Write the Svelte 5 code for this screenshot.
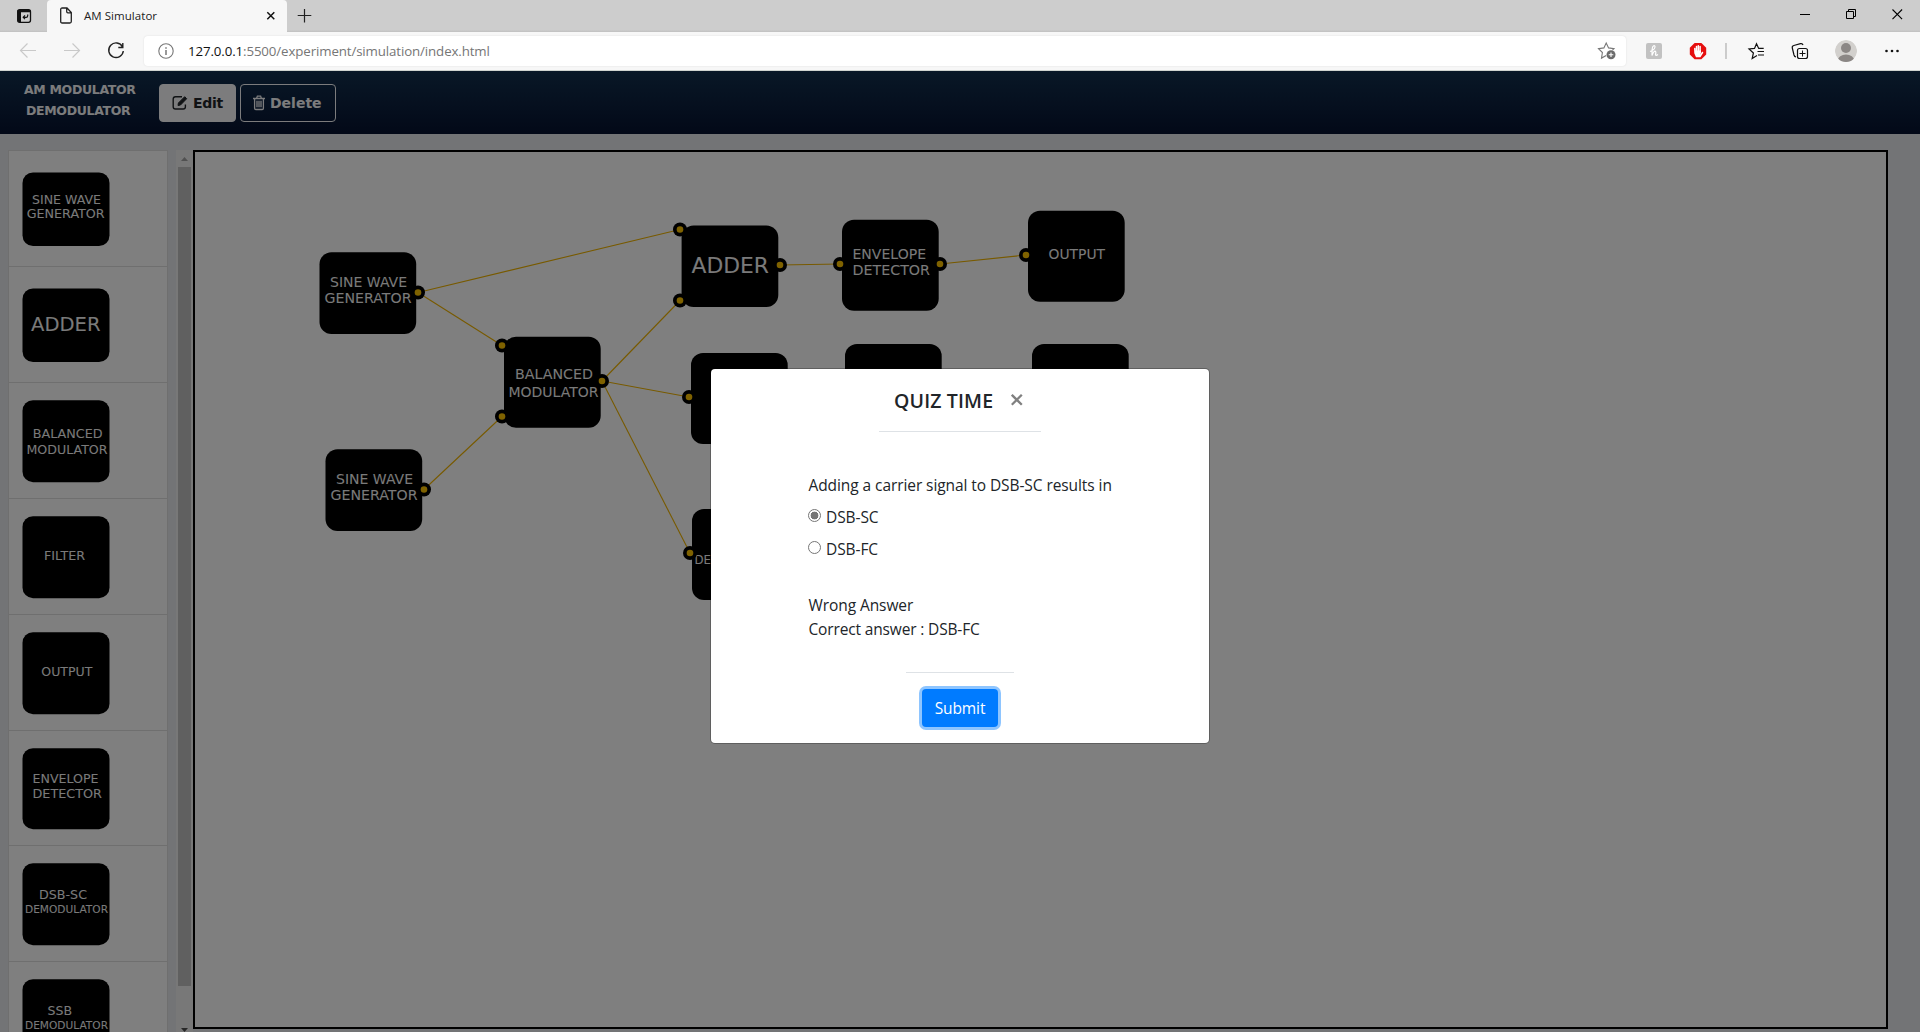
<script>
  // label line: [text, left, baseline, width, font size]
  const palette = [
    { h: 116, y: 22, bh: 73.5, labels: [['SINE WAVE', 24, 53, 69, 12.5], ['GENERATOR', 18.7, 67.5, 78, 12.5]] },
    { h: 116, y: 22, bh: 73.5, labels: [['ADDER', 23, 64.5, 69.5, 19.8]] },
    { h: 116, y: 17.7, bh: 82, labels: [['BALANCED', 24.7, 55.5, 70, 12.5], ['MODULATOR', 18.5, 71.8, 81, 12.5]] },
    { h: 116, y: 17.7, bh: 82, labels: [['FILTER', 36, 61.3, 41, 12.5]] },
    { h: 116, y: 17.7, bh: 82, labels: [['OUTPUT', 33.3, 61.3, 51, 12.5]] },
    { h: 115, y: 17.7, bh: 81, labels: [['ENVELOPE', 24.5, 52.7, 66, 12.5], ['DETECTOR', 24.5, 67, 69.5, 12.5]] },
    { h: 116, y: 17.7, bh: 82, labels: [['DSB-SC', 31, 53.2, 48, 12.5], ['DEMODULATOR', 17, 67.4, 83, 11.2]] },
    { h: 116, y: 17.7, bh: 82, labels: [['SSB', 39.5, 53.2, 24.5, 12.5], ['DEMODULATOR', 17, 67.4, 83, 11.2]] }
  ];

  const nodes = [
    { x: 319.5, y: 252.3, h: 81.7, labels: [['SINE WAVE', 330, 287.2, 77, 13.7], ['GENERATOR', 324.5, 303, 87, 13.7]], ports: [[418, 292.5]] },
    { x: 325.5, y: 449.3, h: 81.7, labels: [['SINE WAVE', 336, 484.2, 77, 13.7], ['GENERATOR', 330.5, 500, 87, 13.7]], ports: [[424, 489.5]] },
    { x: 504, y: 336.7, h: 91, labels: [['BALANCED', 515, 379.3, 78, 13.7], ['MODULATOR', 508.5, 397.2, 90, 13.7]], ports: [[502, 345.5], [502, 416.5], [602, 381]] },
    { x: 681.6, y: 225.5, h: 81.5, labels: [['ADDER', 691.5, 272.5, 77.5, 22]], ports: [[680, 229.5], [680, 300.5], [780, 265]] },
    { x: 842, y: 219.7, h: 91, labels: [['ENVELOPE', 852.5, 259.2, 73.5, 13.7], ['DETECTOR', 852.5, 275, 77.5, 13.7]], ports: [[840, 264], [940, 264]] },
    { x: 1028, y: 210.7, h: 91, labels: [['OUTPUT', 1048.5, 259.4, 56.5, 13.7]], ports: [[1026, 255]] },
    { x: 691, y: 353, h: 91, labels: [], ports: [[689, 397]] },
    { x: 845, y: 344, h: 91, labels: [], ports: [] },
    { x: 1032, y: 344, h: 91, labels: [], ports: [] },
    { x: 692, y: 509, h: 91, labels: [['DEMODULATOR', 694.5, 563.8, 92, 12.3]], ports: [[690, 553]] }
  ];

  const wires = [
    [418, 292.5, 680, 229.5], [418, 292.5, 502, 345.5], [424, 489.5, 502, 416.5],
    [602, 381, 680, 300.5], [602, 381, 689, 397], [602, 381, 690, 553],
    [780, 265, 840, 264], [940, 264, 1026, 255]
  ];
  let answer = $state('DSB-SC');
</script>

<div class="window">
  <div class="tabs">
    <svg class="tabmenu" width="47" height="32" viewBox="0 0 47 32"><rect x="17.700" y="9.700" width="12.800" height="12.600" rx="2" fill="none" stroke="#111" stroke-width="1.300"/><path d="M17.500 12h3.500v10h-1.800q-1.700 0-1.700-1.700zM17.500 10h13v2.200h-13z" fill="#111"/><path d="M27.700 14.500v1.200q0 1.600-1.600 1.600h-2.400M25 15.400l-1.800 1.900 1.800 1.900" fill="none" stroke="#111" stroke-width="1.200"/></svg>
    <div class="tab">
      <svg width="14" height="18" viewBox="0 0 14 18"><path d="M1.700 2.500Q1.700 1 3.200 1H8l4.300 4.500v9q0 1.500-1.500 1.500H3.200q-1.500 0-1.500-1.500zM7.700 1v3.600q0 1.200 1.200 1.200h3.400" fill="none" stroke="#222" stroke-width="1.300"/></svg>
      <span>AM Simulator</span>
      <svg class="x" width="10" height="10" viewBox="0 0 10 10"><path d="M1.300 1.300l7 7M8.300 1.300l-7 7" stroke="#111" stroke-width="1.500"/></svg>
    </div>
    <svg class="plus" width="16" height="16" viewBox="0 0 16 16"><path d="M7.500 1v13.500M.7 7.500h13.600" stroke="#222" stroke-width="1.200"/></svg>
    <svg class="winctl" width="122" height="32" viewBox="0 0 122 32"><path d="M2 14.500h10M94.500 9.500l9.600 9.600M104.100 9.500l-9.600 9.600" stroke="#000" stroke-width="1.100" fill="none"/><path d="M48.500 11.500h7v7h-7zM50.500 11.500v-2h7v7h-2" stroke="#000" fill="none"/></svg>
  </div>

  <div class="toolbar">
    <svg width="144" height="38" viewBox="0 0 144 38" fill="none"><path d="M36 18.500H20.500M27.500 11.500l-7 7 7 7M64 18.500h15.500M72.500 11.500l7 7-7 7" stroke="#c9c9c9" stroke-width="1.200"/><path d="M122.500 14.800A7.300 7.300 0 1 0 123.300 19M122.800 11v4.500h-4.500" stroke="#222" stroke-width="1.400"/></svg>
    <div class="address">
      <svg width="16" height="16" viewBox="0 0 16 16"><circle cx="8" cy="8" r="7.200" fill="none" stroke="#777" stroke-width="1.100"/><path d="M8 7v5M8 4.200v1.500" stroke="#777" stroke-width="1.500"/></svg>
      <p><b>127.0.0.1</b>:5500/experiment/simulation/index.html</p>
      <svg class="fav" width="20" height="20" viewBox="0 0 20 20"><path d="M9.200 14.500l-4.700 2.600.9-5.600-3.900-3.800 5.400-.8L9.200 2l2.400 4.900 5.400.8-1.500 1.500" fill="none" stroke="#777" stroke-width="1.100"/><circle cx="14" cy="13.800" r="4.500" fill="#6b6b6b"/><path d="M14 11.500v4.600M11.700 13.800h4.600" stroke="#fff" stroke-width="1.100"/></svg>
    </div>
    <svg class="ext" width="294" height="38" viewBox="1626 32 294 38">
      <rect x="1646" y="43" width="16" height="16" rx="2" fill="#c2c2c2"/>
      <path d="M1650 51.500q4.500-1.500 5-4.500 0-1.600-1.300-1.200-1.500.7-1.600 4l-.1 5.700q1.800-4.700 3.300-4.300 1 .5.200 3.400 0 1.500 2.500-.2" fill="none" stroke="#fff" stroke-width="1.200"/>
      <path d="M1694.600 43h6.800l4.800 4.800v6.600l-4.800 4.800h-6.800l-4.800-4.800v-6.600z" fill="#e60f0f"/>
      <path d="M1694.800 48.500l.2 4.500 1.500 3.500h3.500l2.500-4M1696.500 46.500v5M1698.300 45.700v6M1700.100 46.500v6" fill="none" stroke="#fff" stroke-width="1.500" stroke-linecap="round"/><path d="M1695 50.500h6l-.5 5-1.500 1.500h-2l-2-3z" fill="#fff"/>
      <path d="M1726 43v16" stroke="#c4c4c4" stroke-width="1.700"/>
      <path d="M1757 55.500l-4.800 3 1.200-5.500-4.400-4 5.500-.6 2-4.700 2.200 4.700h5M1757.500 51.500h6.500M1758 55h6" fill="none" stroke="#111" stroke-width="1.200"/>
      <path d="M1796 57q-1.500-.2-2-2l-1.700-7q-.4-2 1.500-2.500l6.700-1.800q2-.4 2.500 1.300" fill="none" stroke="#111" stroke-width="1.200"/><rect x="1797.500" y="48.500" width="10" height="10" rx="2" fill="none" stroke="#111" stroke-width="1.200"/><path d="M1802.500 50.500v6M1799.500 53.500h6" stroke="#111"/>
      <clipPath id="face"><circle cx="1846" cy="51" r="11"/></clipPath><g clip-path="url(#face)"><circle cx="1846" cy="51" r="11" fill="#d2d0cd"/><circle cx="1846" cy="48" r="5" fill="#8b8785"/><ellipse cx="1846" cy="60.500" rx="8.200" ry="6" fill="#8b8785"/></g>
      <g fill="#111"><circle cx="1886.500" cy="51" r="1.300"/><circle cx="1892" cy="51" r="1.300"/><circle cx="1897.500" cy="51" r="1.300"/></g>
    </svg>
  </div>

  <div class="page">
    <header>
      <h1><span>AM MODULATOR</span><span class="second">DEMODULATOR</span></h1>
      <button class="btn edit"><svg width="16" height="16" viewBox="0 0 16 16" fill="none" stroke="#212529"><path d="M10 1.800H3.500Q1.200 1.800 1.200 4v7.700q0 2.300 2.300 2.300h7.700q2.200 0 2.200-2.300V9.500" stroke-width="1.400"/><path d="M6 10.500l.4-2.500 6.300-6.300 2 2-6.200 6.300z" fill="#212529"/></svg><span>Edit</span></button>
      <button class="btn del"><svg width="12" height="16" viewBox="0 0 12 16" fill="none" stroke="#f8f9fa" stroke-width="1.300"><path d="M0 3.500h12M3.600 3.300l.8-2.200h3.200l.8 2.200M1.600 3.500v9.800q0 1.200 1.200 1.200h6.400q1.200 0 1.200-1.200V3.500M4 5.800v6.500M6 5.800v6.500M8 5.800v6.500"/></svg><span>Delete</span></button>
    </header>

    <main>
      <aside>
        <ul>
          {#each palette as item}
            <li>
              <svg width="110" height={item.h} viewBox="1 0.500 110 {item.h}">
                <rect x="14.500" y={item.y} width="87" height={item.bh} rx="10.500"/>
                {#each item.labels as [t, x, y, w, s]}<text {x} {y} font-size={s} textLength={w} lengthAdjust="spacingAndGlyphs">{t}</text>{/each}
              </svg>
            </li>
          {/each}
        </ul>
        <div class="scroll">
          <svg width="17" height="17" viewBox="0 0 17 17"><path d="M5 11h7l-3.500-4z" fill="#a3a3a3"/></svg>
          <div class="thumb"></div>
          <svg class="down" width="17" height="17" viewBox="0 0 17 17"><path d="M5 13h7l-3.500 4z" fill="#505050"/></svg>
        </div>
      </aside>
      <section class="canvas">
        <svg width="1691" height="875" viewBox="195 152 1691 875">
          {#each nodes as n}
            <rect x={n.x} y={n.y} width="96.700" height={n.h} rx="12"/>
            {#each n.labels as [t, x, y, w, s]}<text {x} {y} font-size={s} textLength={w} lengthAdjust="spacingAndGlyphs">{t}</text>{/each}
          {/each}
          {#each wires as [x1, y1, x2, y2]}<line {x1} {y1} {x2} {y2}/>{/each}
          {#each nodes as n}{#each n.ports as [cx, cy]}<circle {cx} {cy} r="7"/><circle class="pin" {cx} {cy} r="3.300"/>{/each}{/each}
        </svg>
      </section>
    </main>

    <div class="backdrop">
      <div class="modal">
        <div class="head"><h2>QUIZ TIME</h2><svg width="12" height="12" viewBox="0 0 12 12"><path d="M.8.800l10 10M10.800.800l-10 10" stroke="#808080" stroke-width="2.300"/></svg></div>
        <div class="quiz">
          <p class="q">Adding a carrier signal to DSB-SC results in</p>
          {#each ['DSB-SC', 'DSB-FC'] as option}
            <label><input type="radio" name="quiz" value={option} bind:group={answer}/><span>{option}</span></label>
          {/each}
          <p class="result">Wrong Answer</p>
          <p class="correct">Correct answer : DSB-FC</p>
        </div>
        <div class="foot"><button>Submit</button></div>
      </div>
    </div>
  </div>
</div>

<style>
  :global(body) { margin: 0; overflow: hidden; }
  .window { width: 1920px; height: 1032px; overflow: hidden; display: flex; flex-direction: column; font-family: "Open Sans", "Noto Sans", sans-serif; }
  svg { display: block; flex: none; }
  p, h1, h2, ul { margin: 0; padding: 0; }
  .tabs { height: 32px; flex: none; background: linear-gradient(#cdcdcd 30px, #c0c0c0); display: flex; }
  .tab { width: 240px; height: 32px; background: #f7f7f7; border-radius: 4px 4px 0 0; display: flex; align-items: center; box-sizing: border-box; padding: 0 11px 0 12px; font-size: 11.500px; color: #222; }
  .tab span { margin: -1px 0 0 11px; letter-spacing: .05px; }
  .tab .x { margin-left: auto; }
  .plus { margin: 8px 0 0 10px; }
  .winctl { margin-left: auto; }
  .toolbar { height: 38px; flex: none; background: #f7f7f7; display: flex; border-bottom: 1px solid #d0d4cf; }
  .address { width: 1482px; height: 30px; margin-top: 4px; background: #fff; border-radius: 4px; box-shadow: 0 0 2px #ddd; display: flex; align-items: center; box-sizing: border-box; padding: 0 9px 0 14px; }
  .address p { margin-left: 14px; font-size: 13.300px; color: #767676; letter-spacing: -.12px; }
  .address b { font-weight: 400; color: #111; }
  .fav { margin-left: auto; }
  .page { flex: 1; min-height: 0; position: relative; background: #e7e9ec; display: flex; flex-direction: column; }
  header { height: 63px; flex: none; background: linear-gradient(#12304e, #061230); display: flex; box-sizing: border-box; padding-top: 13px; }
  h1 { width: 135px; margin-left: 24px; box-sizing: border-box; color: #f8f9fa; font: 700 12.500px/21px "DejaVu Sans", sans-serif; margin-top: -5px; display: flex; flex-direction: column; letter-spacing: -.33px; white-space: nowrap; }
  .second { margin-left: 2px; }
  .btn { height: 38px; box-sizing: border-box; border: 1px solid #f8f9fa; border-radius: 4px; display: flex; align-items: center; font: 700 14px "DejaVu Sans", sans-serif; padding: 0 12px; }
  .edit { width: 77px; background: #f8f9fa; color: #212529; letter-spacing: -.3px; }
  .del { width: 96px; margin-left: 4px; background: transparent; color: #f8f9fa; }
  .btn span { margin-left: 5px; }
  main { flex: 1; min-height: 0; display: flex; padding-top: 16px; }
  aside { width: 193px; display: flex; overflow: hidden; }
  ul { list-style: none; width: 159.500px; height: 1000px; margin-left: 8px; background: #fff; border: 1px solid #dedede; box-sizing: border-box; }
  li { box-shadow: inset 0 -1px #dedede; }
  text { font-family: "DejaVu Sans", sans-serif; fill: #f4f4f4; }
  .scroll { width: 17px; margin-left: 8.500px; background: #f1f1f1; display: flex; flex-direction: column; align-items: center; }
  .thumb { width: 13px; height: 819px; background: #c1c1c1; }
  .down { margin-top: auto; }
  .canvas { width: 1695px; height: 879px; box-sizing: border-box; border: 2px solid #000; background: #fff; }
  line { stroke: #f0b400; stroke-width: 1.100; }
  .pin { fill: #ffc400; }
  .backdrop { position: absolute; inset: 0; background: rgba(0, 0, 0, .5); display: flex; justify-content: center; align-items: flex-start; }
  .modal { width: 498px; height: 374px; margin-top: 298px; background: #fff; border-radius: 4px; box-shadow: 0 0 0 1px rgba(0, 0, 0, .25); display: flex; flex-direction: column; align-items: center; color: #212529; }
  .head { width: 162px; height: 63px; box-sizing: border-box; border-bottom: 1px solid #dee2e6; padding: 17px 18px 0 15px; display: flex; justify-content: space-between; }
  .head svg { margin-top: 8px; }
  h2 { font-size: 19.500px; line-height: 30px; font-weight: 600; letter-spacing: .15px; white-space: nowrap; }
  .quiz { width: 304px; height: 240px; box-sizing: border-box; padding-top: 41px; font-size: 15.500px; white-space: nowrap; align-self: flex-start; margin-left: 97.500px; letter-spacing: -.08px; }
  .quiz p { line-height: 24px; }
  label { display: flex; align-items: center; height: 24px; margin-top: 8px; }
  input { appearance: none; width: 13px; height: 13px; margin: 0 5px 3px -.500px; border: 1px solid #767676; border-radius: 50%; background: #fff; }
  input:checked { background: radial-gradient(circle, #767676 3.600px, #fff 4.200px); }
  .quiz .result { margin-top: 32px; }
  .quiz .correct { letter-spacing: -.15px; }
  .foot { width: 108px; border-top: 1px solid #dee2e6; padding-top: 16px; display: flex; justify-content: center; }
  .foot button { width: 76px; height: 38px; padding: 0; border: 0; border-radius: 4px; background: #007bff; color: #fff; font: 15.500px "Open Sans", sans-serif; letter-spacing: -.1px; box-shadow: 0 0 0 3px #8ec5ff; }
</style>
